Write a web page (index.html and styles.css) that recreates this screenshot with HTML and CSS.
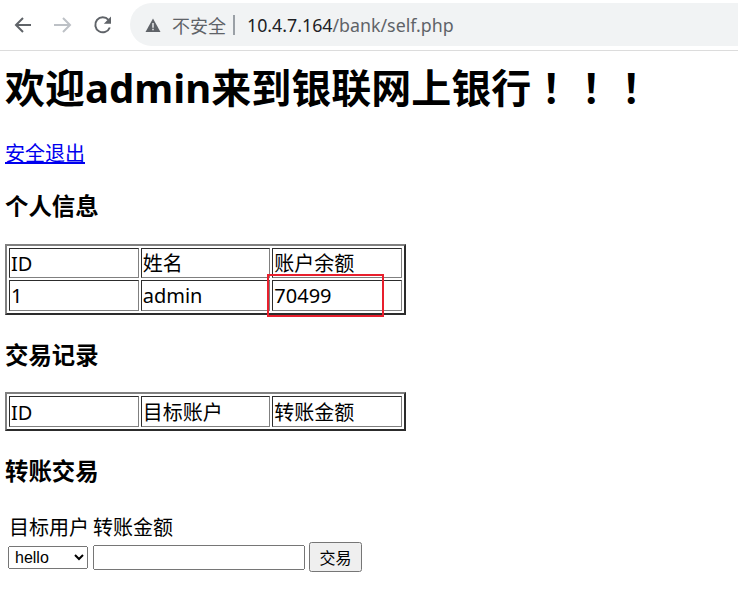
FILE: index.html
```html
<!DOCTYPE html>
<html lang="zh">
<head>
<meta charset="utf-8">
<title>self.php</title>
<link rel="stylesheet" href="styles.css">
</head>
<body>
<header class="toolbar">
  <svg class="nav-icon" viewBox="0 0 20 20"><path d="M18 10H3M10 3l-7 7 7 7" class="stroke-dark"/></svg>
  <svg class="nav-icon" viewBox="0 0 20 20"><path d="M1 10h16M10 3l7 7-7 7" class="stroke-light"/></svg>
  <svg class="nav-icon" viewBox="0 0 20 20"><path d="M16.800 12.500A7.500 7.500 0 1 1 15.500 4.900" class="stroke-dark"/><path d="M18 1.500v7.200h-7.200z" class="fill-dark"/></svg>
  <div class="omnibox">
    <svg class="warn" viewBox="0 0 16 16"><path d="M8 1.500L15.500 15H.5z" class="fill-dark"/><path d="M7.300 6h1.400v4.800H7.300zM7.300 11.800h1.400v1.400H7.300z" class="fill-white"/></svg>
    <span class="insecure">不安全</span>
    <span class="sep"></span>
    <span class="url"><span class="host">10.4.7.164</span>/bank/self.php</span>
  </div>
</header>
<main class="page">
  <h1>欢迎admin来到银联网上银行<span class="bangs" lang="zh-Hant">！！！</span></h1>
  <p class="logout"><a href="#">安全退出</a></p>
  <h3>个人信息</h3>
  <div class="annotated">
    <table class="data">
      <tr class="head short"><td>ID</td><td>姓名</td><td>账户余额</td></tr>
      <tr><td>1</td><td>admin</td><td>70499</td></tr>
    </table>
    <div class="highlight"></div>
  </div>
  <h3 class="after-table">交易记录</h3>
  <table class="data">
    <tr class="head"><td>ID</td><td>目标账户</td><td>转账金额</td></tr>
  </table>
  <h3 class="after-table">转账交易</h3>
  <form class="transfer">
    <div class="labels"><span>目标用户</span><span>转账金额</span></div>
    <div class="controls">
      <select class="target"><option>hello</option></select>
      <input class="amount" type="text">
      <button class="submit" type="button">交易</button>
    </div>
  </form>
</main>
</body>
</html>
```
FILE: styles.css
```css
html, body { margin: 0; padding: 0; background: #fff; }
body {
  width: 738px;
  height: 612px;
  overflow: hidden;
  font-family: "Noto Sans", "Noto Sans CJK SC", sans-serif;
  font-size: 20px;
  color: #000;
}
.toolbar {
  display: flex;
  align-items: center;
  height: 50px;
  border-bottom: 1px solid #dcdcdc;
  padding-left: 13px;
}
.nav-icon { width: 20px; height: 20px; margin-right: 20px; flex: none; }
.nav-icon:nth-of-type(3) { margin-right: 17px; }
.stroke-dark, .stroke-light { fill: none; stroke-width: 2; }
.stroke-dark { stroke: #5f6368; }
.stroke-light { stroke: #bdc1c6; }
.fill-dark { fill: #5f6368; }
.fill-white { fill: #f1f3f4; }
.omnibox {
  display: flex;
  align-items: center;
  flex: 1;
  height: 43px;
  margin-top: -1px;
  padding-left: 15px;
  border-radius: 22px 0 0 22px;
  background: #f1f3f4;
  font-size: 17.8px;
  color: #5f6368;
}
.warn { width: 16px; height: 16px; margin-right: 11px; }
.insecure { font-size: 18px; }
.sep { width: 2px; height: 20px; background: #9aa0a6; margin: 0 12px 0 7px; }
.host { color: #202124; }
.page { padding: 0 5px; }
h1 {
  font-size: 40px;
  line-height: 46px;
  font-weight: 700;
  margin: 14px 0 0;
}
.bangs { font-family: "Noto Sans CJK TC", sans-serif; line-height: 0; }
.logout { margin: 30px 0 0; line-height: 26px; }
a { color: #0000ee; }
h3 { font-size: 23.4px; line-height: 27px; font-weight: 700; margin: 26px 0 24px; }
h3.after-table { margin: 27px 0 23px; }
.annotated { position: relative; width: 401px; }
.data {
  width: 401px;
  table-layout: fixed;
  border: 2px outset #808080;
  border-spacing: 2px;
  border-collapse: separate;
}
.data td {
  border: 1px inset #808080;
  padding: 1px;
  height: 27px;
  line-height: 26px;
  vertical-align: middle;
}
.data .head td { padding: 2px 1px 0; }
.data .short td { height: 26px; }
.highlight {
  position: absolute;
  left: 262px;
  top: 30px;
  width: 113px;
  height: 39px;
  border: 2px solid #e81f2d;
}
.labels { display: flex; gap: 4px; padding-left: 4px; line-height: 26px; }
.transfer { margin-top: 30px; }
.controls { display: flex; align-items: center; margin-top: 1px; gap: 5px; padding-left: 3px; }
.target { width: 80px; height: 23px; padding-left: 2px; font-family: "Liberation Sans", sans-serif; font-size: 16px; }
.amount { width: 212px; height: 25px; box-sizing: border-box; font-size: 16px; }
.submit { width: 53px; height: 30px; margin-left: -1px; font-family: "Noto Sans CJK SC", sans-serif; font-size: 16px; padding: 0; }
```
